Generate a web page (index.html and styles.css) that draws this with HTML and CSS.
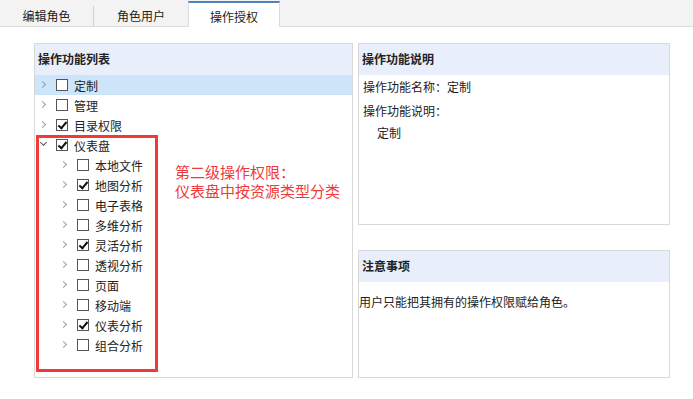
FILE: index.html
```html
<!DOCTYPE html>
<html lang="zh-CN">
<head>
    <meta charset="UTF-8">
    <title>操作授权</title>
    <link rel="stylesheet" href="styles.css">
</head>
<body>
<div class="tabs">
    <div class="tab">编辑角色</div>
    <div class="tab">角色用户</div>
    <div class="tab current">操作授权</div>
</div>
<div class="main">
    <div class="panel left">
        <div class="head">操作功能列表</div>
        <ul class="tree">
            <li class="row selected"><i class="arrow"></i><span class="chk"></span>定制</li>
            <li class="row"><i class="arrow"></i><span class="chk"></span>管理</li>
            <li class="row"><i class="arrow"></i><span class="chk on"></span>目录权限</li>
            <li class="group">
                <div class="row"><i class="arrow open"></i><span class="chk on"></span>仪表盘</div>
                <ul class="sub">
                    <li class="row"><i class="arrow"></i><span class="chk"></span>本地文件</li>
                    <li class="row"><i class="arrow"></i><span class="chk on"></span>地图分析</li>
                    <li class="row"><i class="arrow"></i><span class="chk"></span>电子表格</li>
                    <li class="row"><i class="arrow"></i><span class="chk"></span>多维分析</li>
                    <li class="row"><i class="arrow"></i><span class="chk on"></span>灵活分析</li>
                    <li class="row"><i class="arrow"></i><span class="chk"></span>透视分析</li>
                    <li class="row"><i class="arrow"></i><span class="chk"></span>页面</li>
                    <li class="row"><i class="arrow"></i><span class="chk"></span>移动端</li>
                    <li class="row"><i class="arrow"></i><span class="chk on"></span>仪表分析</li>
                    <li class="row"><i class="arrow"></i><span class="chk"></span>组合分析</li>
                </ul>
            </li>
        </ul>
        <div class="note">第二级操作权限：<br>仪表盘中按资源类型分类</div>
    </div>
    <div class="side">
        <div class="panel info">
            <div class="head">操作功能说明</div>
            <div class="body">
                <p>操作功能名称：定制</p>
                <p class="gap">操作功能说明：</p>
                <p class="indent">定制</p>
            </div>
        </div>
        <div class="panel tips">
            <div class="head">注意事项</div>
            <p class="text">用户只能把其拥有的操作权限赋给角色。</p>
        </div>
    </div>
</div>
</body>
</html>
```

FILE: styles.css
```css
* {
    margin: 0;
    padding: 0;
    box-sizing: border-box;
}

ul {
    list-style: none
}

body {
    font-family: "Microsoft YaHei", "Noto Sans CJK SC", sans-serif;
    font-size: 12px;
    color: #222;
    background: #fff;
}

/* 标签页 */
.tabs {
    display: flex;
    height: 27px;
    background-color: #f3f3f3;
    border-bottom: 1px solid #dcdcdc;
}

.tab {
    width: 94px;
    margin-top: 6px;
    height: 20px;
    line-height: 20px;
    text-align: center;
    color: #222;
}

.tab:first-child {
    border-right: 1px solid #d0d0d0;
}

.tab.current {
    width: 92px;
    height: 26px;
    margin-top: 1px;
    line-height: 28px;
    background-color: #fff;
    border-top: 2px solid #4f81bd;
    border-left: 1px solid #dcdcdc;
    border-right: 1px solid #dcdcdc;
}

/* 主体 */
.main {
    display: flex;
    gap: 5px;
    padding: 16px 0 0 34px;
}

.panel {
    border: 1px solid #d8d8d8;
    background-color: #fff;
}

.head {
    height: 31px;
    line-height: 30px;
    padding-left: 3px;
    background-color: #e8effb;
    font-weight: bold;
}

.left {
    width: 319px;
    height: 335px;
    position: relative;
}

.tree .row {
    display: flex;
    align-items: center;
    height: 20px;
    padding-left: 5px;
}

.tree .row.selected {
    background-color: #cce5f8;
}

.sub .row {
    padding-left: 26px;
}

.arrow {
    width: 8px;
    height: 8px;
    margin-right: 8px;
    position: relative;
}

.arrow::before {
    content: "";
    position: absolute;
    left: 0;
    top: 1px;
    width: 4px;
    height: 4px;
    border-top: 1.5px solid #a0a0a0;
    border-right: 1.5px solid #a0a0a0;
    transform: rotate(45deg);
}

.arrow.open::before {
    left: 1px;
    top: -1px;
    border-color: #555;
    transform: rotate(135deg);
}

.chk {
    width: 12px;
    height: 12px;
    border: 1px solid #555;
    background-color: #fff;
    margin-right: 6px;
    position: relative;
}

.chk.on::after {
    content: "";
    position: absolute;
    left: 3px;
    top: 0;
    width: 3px;
    height: 7px;
    border-right: 2px solid #111;
    border-bottom: 2px solid #111;
    transform: rotate(40deg);
}

/* 红框标注 */
.group {
    position: relative;
}

.group::after {
    content: "";
    position: absolute;
    left: 1px;
    top: 0;
    width: 116px;
    height: 231px;
    border: 3px solid #f03a3a;
}

.note {
    position: absolute;
    left: 140px;
    top: 118px;
    font-size: 15px;
    line-height: 19px;
    color: #f03a3a;
}

/* 右侧 */
.side {
    display: flex;
    flex-direction: column;
    gap: 25px;
}

.info {
    width: 312px;
    height: 182px;
}

.info .body {
    padding: 1px 4px;
}

.info p {
    line-height: 22px;
}

.info p.gap {
    margin-top: 2px;
}

.info p.indent {
    padding-left: 14px;
}

.tips {
    width: 312px;
    height: 128px;
}

.tips .text {
    padding-top: 10px;
    line-height: 20px;
}
```
